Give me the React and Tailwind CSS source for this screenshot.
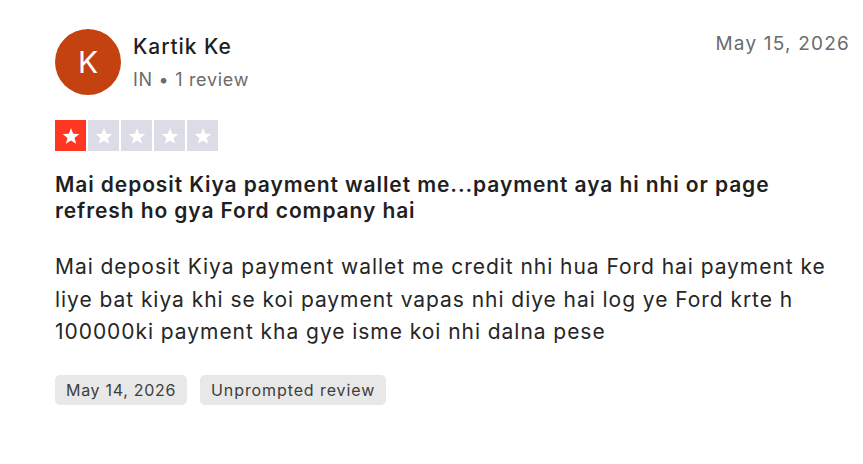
export default function App() {
  return (
    <div className="h-[464px] w-[863px] bg-white font-['Inter',sans-serif] text-[#1f1f1f]">
      <div className="px-[55px] pt-[29px]">
        <div className="flex items-start justify-between">
          <div className="flex items-center gap-3">
            <div className="flex h-[66px] w-[66px] items-center justify-center rounded-full bg-[#c4420f] text-[30px] text-white">
              K
            </div>
            <div className="flex flex-col gap-[9px]">
              <span className="text-[21px] font-medium leading-[26px] tracking-[0.9px]">Kartik Ke</span>
              <span className="text-[18px] leading-[22px] tracking-[0.7px] text-[#6b6b6b]">IN • 1 review</span>
            </div>
          </div>
          <span className="mt-[2px] -mr-[42px] text-[19px] leading-[26px] tracking-[1.2px] text-[#6b6b6b]">
            May 15, 2026
          </span>
        </div>

        <div className="mt-[25px] flex gap-[2px]">
          {[0, 1, 2, 3, 4].map(i => (
            <div
              key={i}
              className={
                'flex h-[31px] w-[31px] items-center justify-center ' +
                (i === 0 ? 'bg-[#ff3722]' : 'bg-[#dcdce6]')
              }
            >
              <svg viewBox="0 0 24 24" className="h-[20px] w-[20px]" fill="white">
                <path d="M12 2.5l2.6 6.9 7.4.3-5.8 4.6 2 7.1L12 17.3l-6.2 4.1 2-7.1L2 9.7l7.4-.3z" />
              </svg>
            </div>
          ))}
        </div>

        <h2 className="mt-[21px] whitespace-nowrap text-[21px] font-semibold leading-[26px] tracking-[0.9px]">
          Mai deposit Kiya payment wallet me...payment aya hi nhi or page
          <br />
          refresh ho gya Ford company hai
        </h2>

        <p className="mt-[27px] whitespace-nowrap text-[21px] leading-[32.5px] tracking-[0.95px] text-[#262626]">
          Mai deposit Kiya payment wallet me credit nhi hua Ford hai payment ke
          <br />
          liye bat kiya khi se koi payment vapas nhi diye hai log ye Ford krte h
          <br />
          100000ki payment kha gye isme koi nhi dalna pese
        </p>

        <div className="mt-[26px] flex gap-[13px]">
          <span className="rounded-[5px] bg-[#e8e8e8] px-[11px] py-[4px] text-[16px] leading-[22px] tracking-[0.7px] text-[#3d3d3d]">
            May 14, 2026
          </span>
          <span className="rounded-[5px] bg-[#e8e8e8] px-[11px] py-[4px] text-[16px] leading-[22px] tracking-[0.9px] text-[#3d3d3d]">
            Unprompted review
          </span>
        </div>
      </div>
    </div>
  )
}
